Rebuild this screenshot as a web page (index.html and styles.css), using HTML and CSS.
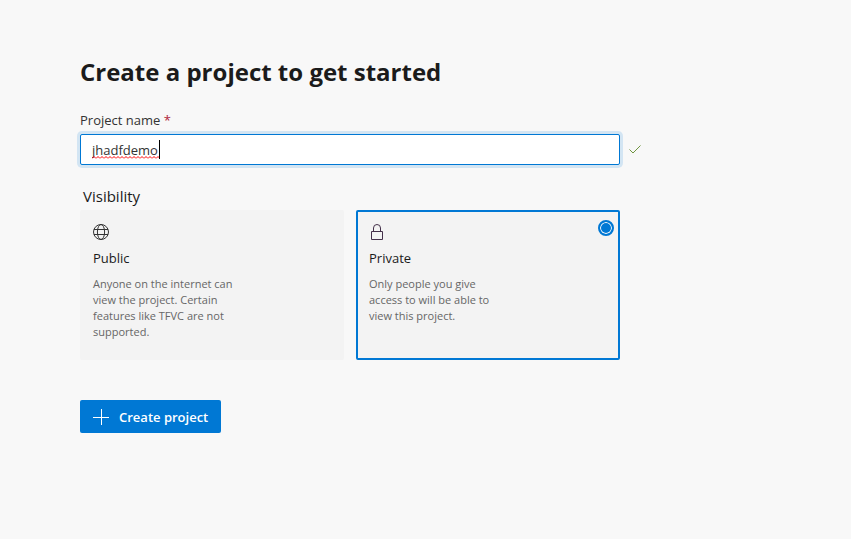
FILE: index.html
```html
<!DOCTYPE html>
<html lang="en">
<head>
<meta charset="utf-8">
<meta name="viewport" content="width=device-width, initial-scale=1">
<title>Create a project to get started</title>
<link rel="stylesheet" href="styles.css">
</head>
<body>
<main class="page">
  <h1 class="title">Create a project to get started</h1>
  <form class="form">
    <label class="field-label" for="name">Project name <span class="required">*</span></label>
    <div class="field-row">
      <div class="field">
        <input class="field-input" id="name" type="text" value="jhadfdemo" spellcheck="false" autocomplete="off" required>
        <svg class="spelling" viewBox="0 0 68 19" aria-hidden="true">
          <defs><pattern id="wave" width="4" height="3" y="16" patternUnits="userSpaceOnUse"><path d="M0 2.500 2 .5 4 2.500"/></pattern></defs>
          <rect class="wave" y="16" width="67" height="3"/>
          <rect class="caret" x="67" width="1" height="19"/>
        </svg>
      </div>
      <svg class="check" viewBox="0 0 14 14" aria-hidden="true"><path d="M1.500 6.500 5 10 12.500 2.500"/></svg>
    </div>
    <fieldset class="visibility">
      <legend class="legend">Visibility</legend>
      <div class="cards">
        <label class="card">
          <input class="card-radio" type="radio" name="visibility" value="public">
          <svg class="card-icon" viewBox="0 0 16 16" aria-hidden="true"><circle cx="8" cy="8" r="7.500"/><ellipse cx="8" cy="8" rx="3.600" ry="7.500"/><path d="M1 5.500H15M1 10.500H15"/></svg>
          <span class="card-title">Public</span>
          <span class="card-text">Anyone on the internet can view the project. Certain features like TFVC are not supported.</span>
        </label>
        <label class="card">
          <input class="card-radio" type="radio" name="visibility" value="private" checked>
          <svg class="card-icon lock" viewBox="0 0 16 16" aria-hidden="true"><path d="M2.500 7.500H13.500V15.500H2.500ZM4.500 7.500V4a3.500 3.500 0 0 1 7 0V7.500"/></svg>
          <span class="card-title">Private</span>
          <span class="card-text">Only people you give access to will be able to view this project.</span>
        </label>
      </div>
    </fieldset>
    <button class="create" type="button">
      <svg class="plus" viewBox="0 0 16 16" aria-hidden="true"><path d="M8.500 0V16M0 8.500H16"/></svg>
      <span>Create project</span>
    </button>
  </form>
</main>
</body>
</html>
```
FILE: styles.css
```css
* {
  box-sizing: border-box;
}

body {
  margin: 0;
  background: #f8f8f8;
  color: #1b1b1b;
  font: 13px/20px "Open Sans", "Noto Sans", sans-serif;
}

.page {
  max-width: 722px;
  padding: 52px 80px;
}

.title {
  margin: 0 0 18px;
  font-size: 24px;
  line-height: 40px;
  font-weight: 700;
}

.field-label {
  display: block;
  margin-bottom: 4px;
  color: #333;
}

.required {
  color: #b0243a;
}

.field-row {
  display: flex;
  align-items: center;
  gap: 8px;
}

.field {
  position: relative;
  flex: 1;
  max-width: 540px;
}

.field-input {
  display: block;
  width: 100%;
  height: 31px;
  padding: 0 11px;
  border: 1px solid #0078d4;
  border-radius: 2px;
  outline: 0;
  background: #fff;
  box-shadow: 0 0 0 3px #d3e5f3;
  color: #333;
  font: inherit;
}

.spelling {
  position: absolute;
  top: 6px;
  left: 12px;
  width: 68px;
  height: 19px;
  pointer-events: none;
}

.spelling path {
  fill: none;
  stroke: #f00;
}

.wave {
  fill: url(#wave);
}

.caret {
  fill: #000;
}

.check {
  flex: none;
  width: 14px;
  height: 14px;
  fill: none;
  stroke: #6f9440;
}

.visibility {
  max-width: 540px;
  margin: 18px 0 40px;
  padding: 0;
  border: 0;
}

.legend {
  padding: 0 3px 1px;
  font-size: 15px;
  line-height: 26px;
}

.cards {
  display: grid;
  grid-template-columns: 1fr 1fr;
  gap: 12px;
}

.card {
  position: relative;
  display: flex;
  flex-direction: column;
  min-height: 150px;
  padding: 12px 11px;
  border: 2px solid #f3f3f3;
  border-radius: 2px;
  background: #f3f3f3;
}

.card:has(:checked) {
  border-color: #0078d4;
}

.card-radio {
  position: absolute;
  top: 8px;
  right: 4px;
  width: 16px;
  height: 16px;
  margin: 0;
  appearance: none;
}

.card-radio:checked {
  border: 2px solid #0078d4;
  border-radius: 50%;
  background: #0078d4;
  box-shadow: inset 0 0 0 1px #fff;
}

.card-icon {
  width: 16px;
  height: 16px;
  margin-bottom: 8px;
  fill: none;
  stroke: #333;
}

.lock {
  stroke: #44304a;
}

.card-title {
  margin-bottom: 8px;
}

.card-text {
  max-width: 141px;
  color: #666;
  font-size: 11px;
  line-height: 16px;
}

.create {
  display: flex;
  align-items: center;
  gap: 10px;
  height: 33px;
  padding: 0 13px;
  border: 0;
  border-radius: 2px;
  background: #0078d4;
  color: #fff;
  font: inherit;
  font-weight: 600;
}

.plus {
  width: 16px;
  height: 16px;
  fill: none;
  stroke: #fff;
}
```
